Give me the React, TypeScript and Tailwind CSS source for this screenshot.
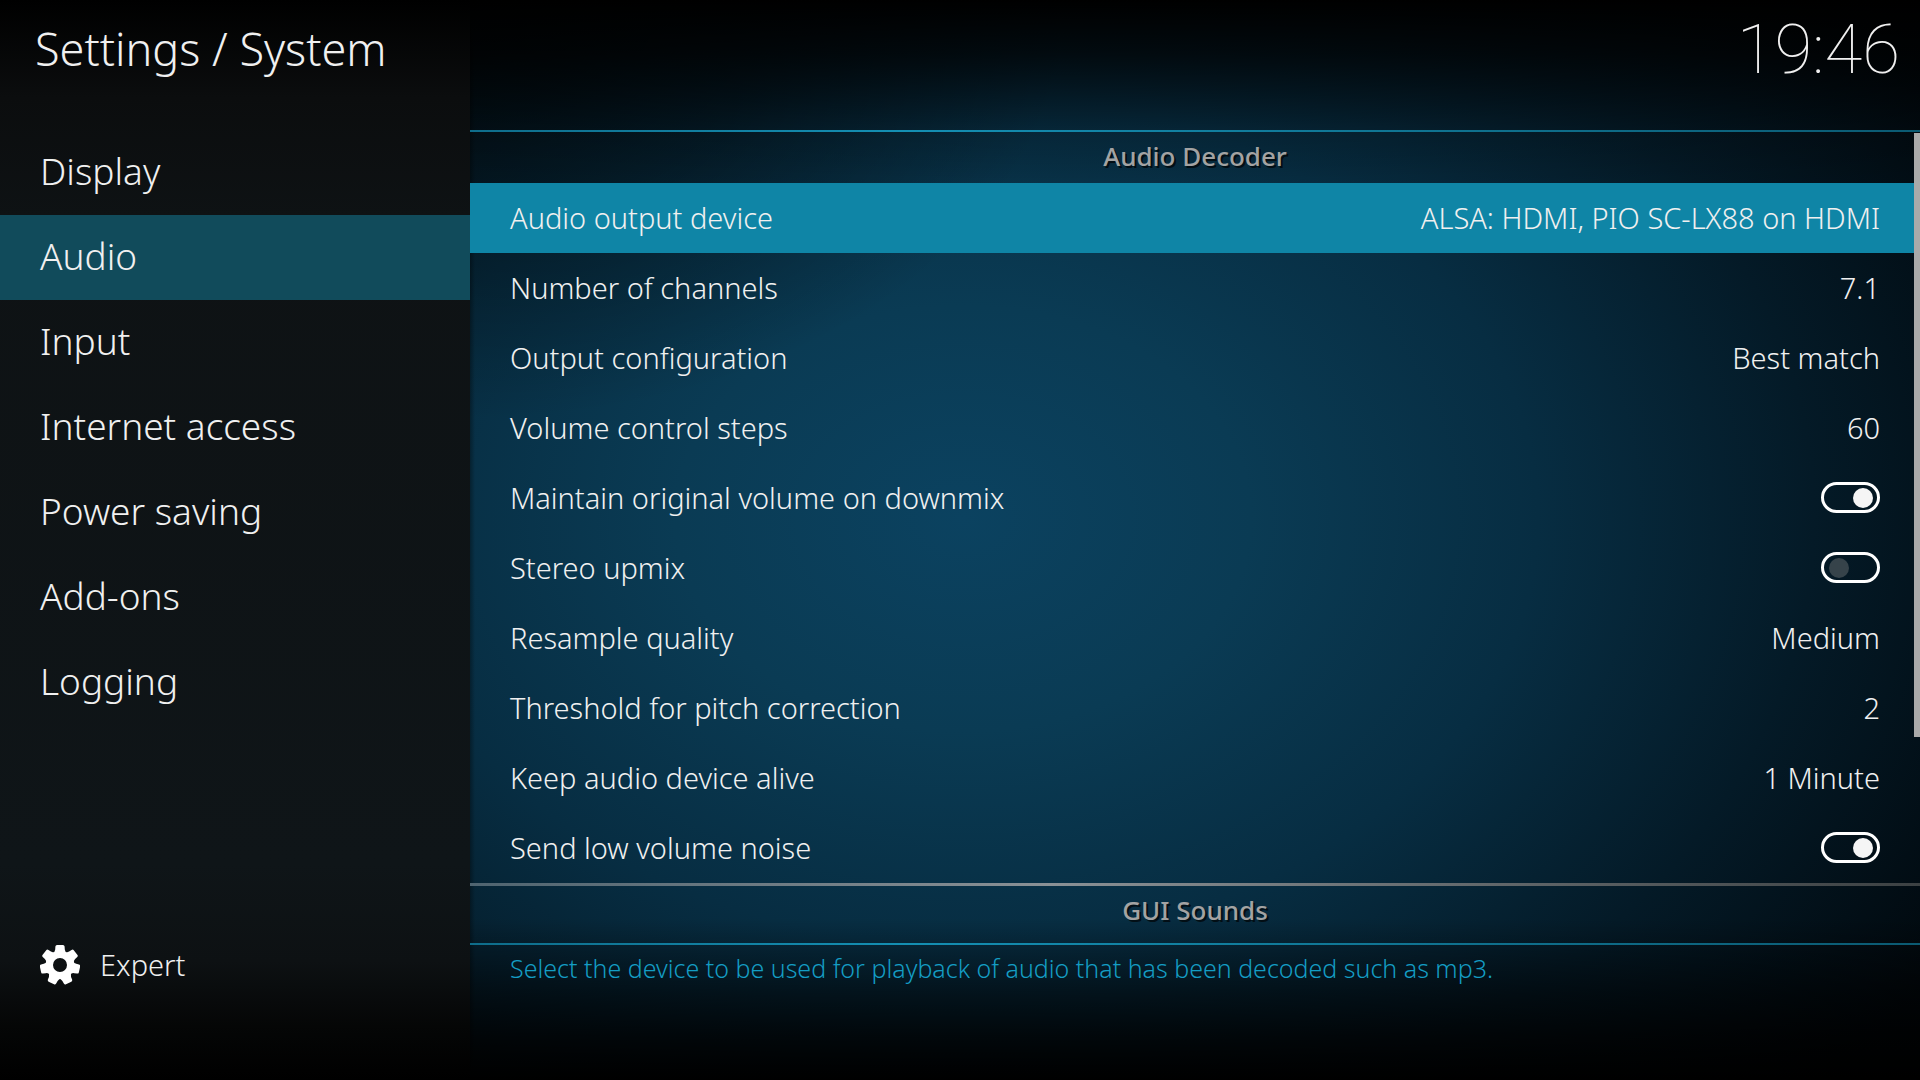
import { useState } from 'react'

const categories = ['Display', 'Audio', 'Input', 'Internet access', 'Power saving', 'Add-ons', 'Logging']

type Setting = { label: string; value: string | boolean }

const audioDecoder: Setting[] = [
  { label: 'Audio output device', value: 'ALSA: HDMI, PIO SC-LX88 on HDMI' },
  { label: 'Number of channels', value: '7.1' },
  { label: 'Output configuration', value: 'Best match' },
  { label: 'Volume control steps', value: '60' },
  { label: 'Maintain original volume on downmix', value: true },
  { label: 'Stereo upmix', value: false },
  { label: 'Resample quality', value: 'Medium' },
  { label: 'Threshold for pitch correction', value: '2' },
  { label: 'Keep audio device alive', value: '1 Minute' },
  { label: 'Send low volume noise', value: true },
]

function GearIcon() {
  return (
    <svg viewBox="-20 -20 40 40" className="size-10 shrink-0 text-white" fill="currentColor" aria-hidden="true">
      <path
        fillRule="evenodd"
        d="M0-14a14 14 0 1 0 0 28a14 14 0 1 0 0-28ZM0-7a7 7 0 1 1 0 14a7 7 0 1 1 0-14Z"
      />
      {[0, 1, 2, 3, 4, 5, 6].map((n) => (
        <path
          key={n}
          transform={`rotate(${(n * 360) / 7})`}
          d="M-7.5-11.5Q-5-13-4.8-15.5L-4.6-18.4Q-4.4-20-3-20H3Q4.4-20 4.6-18.4L4.8-15.5Q5-13 7.5-11.5Z"
        />
      ))}
    </svg>
  )
}

function SectionTitle({ children }: { children: string }) {
  return (
    <h2 className="text-center text-[26px] leading-[49px] font-medium text-[#a3a3a3] [text-shadow:2px_2px_0_#000a]">
      {children}
    </h2>
  )
}

function Rule() {
  return (
    <div className="h-[2px] bg-linear-to-r from-[#0e6d8b] via-[#148fb3] via-30% to-[#0b5a72]" />
  )
}

function SettingRow({ setting, focused }: { setting: Setting; focused: boolean }) {
  const { label, value } = setting
  const row = `flex h-[70px] w-full items-center justify-between pr-[34px] pb-px pl-10 text-left ${
    focused ? 'bg-[#0f85a6]' : ''
  }`

  if (typeof value === 'boolean') {
    return (
      <label className={row}>
        <span>{label}</span>
        <input
          type="checkbox"
          role="switch"
          defaultChecked={value}
          className="flex h-[31px] w-[59px] appearance-none items-center rounded-full border-[3px] border-white px-[5px] before:size-5 before:rounded-full before:bg-[#36434a] checked:justify-end checked:px-1 checked:before:bg-[#f5f5f5]"
        />
      </label>
    )
  }

  return (
    <button type="button" className={row}>
      <span>{label}</span>
      <span>{value}</span>
    </button>
  )
}

export default function App() {
  const [category, setCategory] = useState('Audio')

  return (
    <div className="flex min-h-screen bg-black font-['Noto_Sans',sans-serif] font-light text-[#f0f0f0]">
      <aside className="flex w-[470px] shrink-0 flex-col bg-[linear-gradient(to_bottom,#000_0%,#0b0d0e_9%,#0e1214_20%,#0f1518_80%,#0d1113_89%,#050606_95%,#000_100%)]">
        <h1 className="h-[130px] pt-[18px] pl-[35px] text-[45px] leading-[62px]">Settings / System</h1>
        <nav className="flex flex-col">
          {categories.map((name) => (
            <button
              key={name}
              type="button"
              onClick={() => setCategory(name)}
              className={`h-[85px] pb-1 pl-10 text-left text-[37px] ${name === category ? 'bg-[#114b5b]' : ''}`}
            >
              {name}
            </button>
          ))}
        </nav>
        <button type="button" className="mt-auto mb-20 flex h-[70px] items-center gap-5 pl-10 text-[29px]">
          <GearIcon />
          Expert
        </button>
      </aside>

      <main className="flex min-w-0 flex-1 flex-col bg-[linear-gradient(to_right,#0005,#0000_5px),linear-gradient(to_bottom,#000_0%,#000b_5%,#0003_12%,#0000_18%,#0000_85%,#0008_92%,#000c_96%,#000_100%),radial-gradient(ellipse_600px_420px_at_0%_0%,#000a_0%,#0006_50%,#0000_100%),radial-gradient(ellipse_1150px_850px_at_34%_48%,#0b4260_0%,#0a3b54_25%,#072d42_50%,#041a27_74%,#01080d_100%)]">
        <header className="flex h-[130px] justify-end pt-2 pr-5">
          <time className="font-['Roboto',sans-serif] text-[69px] leading-[84px] font-thin">19:46</time>
        </header>
        <Rule />
        <div className="relative text-[29px]">
          <section>
            <SectionTitle>Audio Decoder</SectionTitle>
            <div className="mr-[6px] pt-[2px]">
              {audioDecoder.map((setting, i) => (
                <SettingRow key={setting.label} setting={setting} focused={i === 0} />
              ))}
            </div>
          </section>
          <div className="absolute top-px right-0 h-[604px] w-[6px] bg-[#aaaaaa]" />
        </div>
        <div className="h-[3px] bg-linear-to-r from-[#4f6470] via-[#8a9196] via-40% to-[#3c4143]" />
        <section className="h-[57px]">
          <SectionTitle>GUI Sounds</SectionTitle>
        </section>
        <Rule />
        <p className="pt-[5px] pl-10 text-[25px] leading-9 text-[#149dc4]">
          Select the device to be used for playback of audio that has been decoded such as mp3.
        </p>
      </main>
    </div>
  )
}
